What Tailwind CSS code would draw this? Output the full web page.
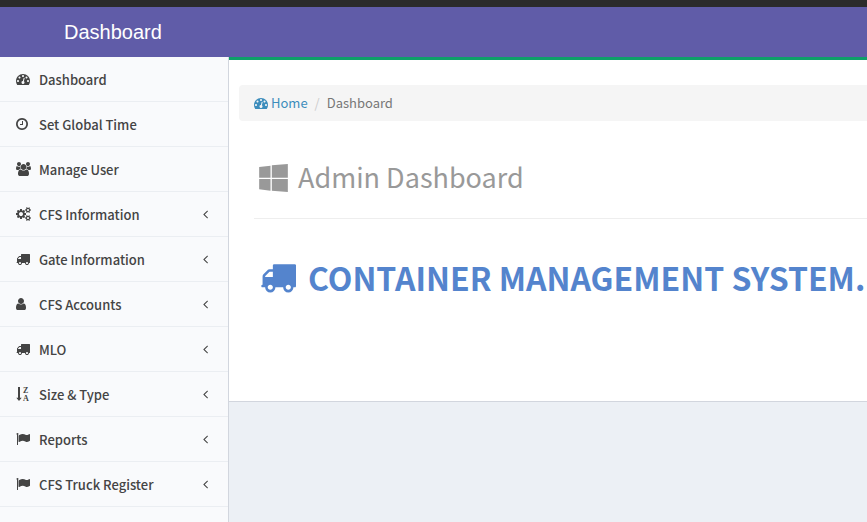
<!DOCTYPE html>
<html lang="en">
<head>
<meta charset="utf-8">
<meta name="viewport" content="width=device-width, initial-scale=1">
<title>Dashboard</title>
<script src="https://cdn.jsdelivr.net/npm/@tailwindcss/browser@4"></script>
</head>
<body class="h-screen overflow-hidden flex flex-col bg-[#ecf0f5] font-['Noto_Sans_CJK_SC','Noto_Sans',sans-serif] text-[13px] leading-5 text-[#333]">
<svg class="hidden" aria-hidden="true">
  <symbol id="tachometer" viewBox="0 0 1792 1792"><path d="M384 1152q0-53-37.500-90.500t-90.500-37.500-90.500 37.500-37.500 90.500 37.500 90.500 90.500 37.500 90.500-37.500 37.500-90.500zm192-448q0-53-37.500-90.500t-90.500-37.500-90.500 37.500-37.500 90.500 37.500 90.500 90.500 37.500 90.500-37.500 37.500-90.500zm428 481l101-382q6-26-7.500-48.500t-38.500-29.500-48 6.500-30 39.500l-101 382q-60 5-107 43.500t-63 98.500q-20 77 20 146t117 89 146-20 89-117q16-60-6-117t-72-91zm660-33q0-53-37.500-90.500t-90.500-37.500-90.500 37.500-37.500 90.500 37.500 90.500 90.500 37.500 90.500-37.500 37.500-90.500zm-640-640q0-53-37.500-90.500t-90.500-37.500-90.500 37.500-37.500 90.500 37.500 90.500 90.500 37.500 90.500-37.500 37.500-90.500zm448 192q0-53-37.500-90.500t-90.500-37.500-90.500 37.500-37.500 90.500 37.500 90.500 90.500 37.500 90.500-37.500 37.500-90.500zm320 448q0 261-141 483-19 29-54 29h-1402q-35 0-54-29-141-221-141-483 0-182 71-348t191-286 286-191 348-71 348 71 286 191 191 286 71 348z"/></symbol>
  <symbol id="clock" viewBox="128 0 1536 1792"><path d="M1024 544v448q0 14-9 23t-23 9h-320q-14 0-23-9t-9-23v-64q0-14 9-23t23-9h224v-352q0-14 9-23t23-9h64q14 0 23 9t9 23zm416 352q0-148-73-273t-198-198-273-73-273 73-198 198-73 273 73 273 198 198 273 73 273-73 198-198 73-273zm224 0q0 209-103 385.500t-279.500 279.500-385.500 103-385.500-103-279.500-279.500-103-385.500 103-385.500 279.500-279.500 385.500-103 385.500 103 279.500 279.500 103 385.500z"/></symbol>
  <symbol id="users" viewBox="0 0 1920 1792"><path d="M593 896q-162 5-265 128h-134q-82 0-138-40.500t-56-118.500q0-353 124-353 6 0 43.500 21t97.500 42.500 119 21.500q67 0 133-23-5 37-5 66 0 139 81 256zm1071 637q0 120-73 189.500t-194 69.500h-874q-121 0-194-69.500t-73-189.500q0-53 3.500-103.500t14-109 26.500-108.500 43-97.500 62-81 85.500-53.500 111.500-20q10 0 43 21.500t73 48 107 48 135 21.500 135-21.500 107-48 73-48 43-21.500q61 0 111.500 20t85.500 53.500 62 81 43 97.500 26.500 108.500 14 109 3.500 103.500zm-1024-1277q0 106-75 181t-181 75-181-75-75-181 75-181 181-75 181 75 75 181zm704 384q0 159-112.500 271.500t-271.500 112.500-271.500-112.500-112.500-271.500 112.500-271.500 271.500-112.500 271.500 112.500 112.500 271.500zm576 225q0 78-56 118.500t-138 40.500h-134q-103-123-265-128 81-117 81-256 0-29-5-66 66 23 133 23 59 0 119-21.500t97.500-42.500 43.500-21q124 0 124 353zm-128-609q0 106-75 181t-181 75-181-75-75-181 75-181 181-75 181 75 75 181z"/></symbol>
  <symbol id="cogs" viewBox="0 0 1920 1792"><path d="M896 896q0-106-75-181t-181-75-181 75-75 181 75 181 181 75 181-75 75-181zm768 512q0-52-38-90t-90-38-90 38-38 90q0 53 37.500 90.500t90.500 37.500 90.500-37.500 37.500-90.500zm0-1024q0-52-38-90t-90-38-90 38-38 90q0 53 37.500 90.500t90.500 37.500 90.500-37.500 37.500-90.500zm-384 421v185q0 10-7 19.500t-16 10.500l-155 24q-11 35-32 76 34 48 90 115 7 11 7 20 0 12-7 19-23 30-82.500 89.500t-78.500 59.500q-11 0-21-7l-115-90q-37 19-77 31-11 108-23 155-7 24-30 24h-186q-11 0-20-7.500t-10-17.500l-23-153q-34-10-75-31l-118 89q-7 7-20 7-11 0-21-8-144-133-144-160 0-9 7-19 10-14 41-53t47-61q-23-44-35-82l-152-24q-10-1-17-9.500t-7-19.500v-185q0-10 7-19.500t16-10.500l155-24q11-35 32-76-34-48-90-115-7-11-7-20 0-12 7-20 22-30 82-89t79-59q11 0 21 7l115 90q34-18 77-32 11-108 23-154 7-24 30-24h186q11 0 20 7.500t10 17.500l23 153q34 10 75 31l118-89q8-7 20-7 11 0 21 8 144 133 144 160 0 8-7 19-12 16-42 54t-45 60q23 48 34 82l152 23q10 2 17 10.500t7 19.500zm640 533v140q0 16-149 31-12 27-30 52 51 113 51 138 0 4-4 7-122 71-124 71-8 0-46-47t-52-68q-20 2-30 2t-30-2q-14 21-52 68t-46 47q-2 0-124-71-4-3-4-7 0-25 51-138-18-25-30-52-149-15-149-31v-140q0-16 149-31 13-29 30-52-51-113-51-138 0-4 4-7 4-2 35-20t59-34 30-16q8 0 46 46.500t52 67.500q20-2 30-2t30 2q51-71 92-112l6-2q4 0 124 70 4 3 4 7 0 25-51 138 17 23 30 52 149 15 149 31zm0-1024v140q0 16-149 31-12 27-30 52 51 113 51 138 0 4-4 7-122 71-124 71-8 0-46-47t-52-68q-20 2-30 2t-30-2q-14 21-52 68t-46 47q-2 0-124-71-4-3-4-7 0-25 51-138-18-25-30-52-149-15-149-31v-140q0-16 149-31 13-29 30-52-51-113-51-138 0-4 4-7 4-2 35-20t59-34 30-16q8 0 46 46.500t52 67.500q20-2 30-2t30 2q51-71 92-112l6-2q4 0 124 70 4 3 4 7 0 25-51 138 17 23 30 52 149 15 149 31z"/></symbol>
  <symbol id="truck" viewBox="0 0 1792 1792"><path d="M640 1408q0-52-38-90t-90-38-90 38-38 90 38 90 90 38 90-38 38-90zm-384-512h384v-256h-158q-13 0-22 9l-195 195q-9 9-9 22v30zm1280 512q0-52-38-90t-90-38-90 38-38 90 38 90 90 38 90-38 38-90zm256-1088v1024q0 15-4 26.500t-13.500 18.500-16.500 11.500-23.500 6-22.500 2-25.500 0-22.500-.5q0 106-75 181t-181 75-181-75-75-181h-384q0 106-75 181t-181 75-181-75-75-181h-64q-3 0-22.500.5t-25.500 0-22.500-2-23.500-6-16.500-11.500-13.500-18.500-4-26.500q0-26 19-45t45-19v-320q0-8-.5-35t0-38 2.500-34.500 6.500-37 14-30.500 22.500-30l198-198q19-19 50.500-32t58.500-13h160v-192q0-26 19-45t45-19h1024q26 0 45 19t19 45z"/></symbol>
  <symbol id="user" viewBox="256 0 1280 1792"><path d="M1536 1399q0 109-62.500 187t-150.500 78h-854q-88 0-150.500-78t-62.500-187q0-85 8.500-160.500t31.500-152 58.500-131 94-89 134.500-34.500q131 128 313 128t313-128q76 0 134.500 34.500t94 89 58.500 131 31.500 152 8.500 160.500zm-256-887q0 159-112.500 271.500t-271.500 112.500-271.500-112.500-112.500-271.500 112.500-271.500 271.500-112.500 271.500 112.500 112.500 271.500z"/></symbol>
  <symbol id="sort" viewBox="0 0 14 14"><path d="M2 0h2v10.800h1.700L3 14 .3 10.800h1.700z"/><text x="7" y="6" font-family="Liberation Serif" font-weight="700" font-size="8">Z</text><text x="7" y="14" font-family="Liberation Serif" font-weight="700" font-size="8">A</text></symbol>
  <symbol id="flag" viewBox="0 0 1792 1792"><path d="M320 256q0 72-64 110v1266q0 13-9.500 22.500t-22.500 9.500h-64q-13 0-22.500-9.500t-9.500-22.500v-1266q-64-38-64-110 0-53 37.500-90.500t90.500-37.500 90.500 37.500 37.500 90.500zm1472 64v763q0 25-12.500 38.500t-39.500 27.500q-215 116-369 116-61 0-123.500-22t-108.500-48-115.500-48-142.500-22q-192 0-464 146-17 9-33 9-26 0-45-19t-19-45v-742q0-32 31-55 21-14 79-43 236-120 421-120 107 0 200 29t219 88q38 19 88 19 54 0 117.500-21t110-47 88-47 54.500-21q26 0 45 19t19 45z"/></symbol>
  <symbol id="angle" viewBox="576 0 640 1792"><path d="M1203 544q0 13-10 23l-393 393 393 393q10 10 10 23t-10 23l-50 50q-10 10-23 10t-23-10l-466-466q-10-10-10-23t10-23l466-466q10-10 23-10t23 10l50 50q10 10 10 23z"/></symbol>
  <symbol id="windows" viewBox="0 0 86 84"><path d="M0 9l34-4v36H0zM38 4l48-4v41H38zM0 45h34v35L0 76zM38 45h48v39l-48-4z"/></symbol>
</svg>
<div class="h-[7px] shrink-0 bg-[#2b2b2b]"></div>
<header class="h-[50px] shrink-0 bg-[#605ca8] px-16 flex items-center">
  <a href="#" class="font-['Liberation_Sans',Arial,sans-serif] text-[20px] text-white">Dashboard</a>
</header>
<div class="flex flex-1 min-h-0">
  <nav class="w-[229px] shrink-0 bg-[#f9fafc] border-r border-[#d2d6de] font-medium text-[#444]">
    <ul class="[&>li]:border-b [&>li]:border-[#ebeef2] [&_a]:flex [&_a]:h-11 [&_a]:items-center [&_a]:pl-4 [&_a]:pr-5 [&_svg]:h-[14px] [&_svg]:fill-current [&_i]:w-[23px] [&_i]:not-italic [&_span]:flex-1 [&_span]:pt-px">
      <li><a href="#"><i><svg class="w-[14px]"><use href="#tachometer"/></svg></i><span>Dashboard</span></a></li>
      <li><a href="#"><i><svg class="w-[12px]"><use href="#clock"/></svg></i><span>Set Global Time</span></a></li>
      <li><a href="#"><i><svg class="w-[15px]"><use href="#users"/></svg></i><span>Manage User</span></a></li>
      <li><a href="#"><i><svg class="w-[15px]"><use href="#cogs"/></svg></i><span>CFS Information</span><svg class="w-[5px]"><use href="#angle"/></svg></a></li>
      <li><a href="#"><i><svg class="w-[14px]"><use href="#truck"/></svg></i><span>Gate Information</span><svg class="w-[5px]"><use href="#angle"/></svg></a></li>
      <li><a href="#"><i><svg class="w-[10px]"><use href="#user"/></svg></i><span>CFS Accounts</span><svg class="w-[5px]"><use href="#angle"/></svg></a></li>
      <li><a href="#"><i><svg class="w-[14px]"><use href="#truck"/></svg></i><span>MLO</span><svg class="w-[5px]"><use href="#angle"/></svg></a></li>
      <li><a href="#"><i><svg class="w-[14px]"><use href="#sort"/></svg></i><span>Size &amp; Type</span><svg class="w-[5px]"><use href="#angle"/></svg></a></li>
      <li><a href="#"><i><svg class="w-[14px]"><use href="#flag"/></svg></i><span>Reports</span><svg class="w-[5px]"><use href="#angle"/></svg></a></li>
      <li><a href="#"><i><svg class="w-[14px]"><use href="#flag"/></svg></i><span>CFS Truck Register</span><svg class="w-[5px]"><use href="#angle"/></svg></a></li>
    </ul>
  </nav>
  <div class="flex-1 min-w-0">
    <main class="bg-white border-t-[3px] border-t-[#0ea069] border-b border-b-[#d2d6de] pt-[25px] pb-[104px] pl-[10px]">
      <nav aria-label="Breadcrumb" class="bg-[#f5f5f5] rounded-l h-9 px-[15px] flex items-center text-[#777]">
        <a href="#" class="flex items-center gap-[3px] text-[#3c8dbc]"><svg class="size-[14px] fill-current"><use href="#tachometer"/></svg>Home</a>
        <span class="px-[7px] text-[#ccc]">/</span>
        <span>Dashboard</span>
      </nav>
      <div class="ml-[15px]">
        <h1 class="h-[98px] pt-4 pl-[5px] flex items-center gap-[10px] border-b border-[#eee] text-[27px] text-[#999]"><svg class="w-[29px] h-7 fill-current"><use href="#windows"/></svg><span class="pb-0.5">Admin Dashboard</span></h1>
        <h2 class="pt-[38px] pl-[6px] flex items-center gap-3 leading-10 text-[32px] font-bold whitespace-nowrap text-[#5484cd]"><svg class="size-9 shrink-0 fill-current"><use href="#truck"/></svg>CONTAINER MANAGEMENT SYSTEM.</h2>
      </div>
    </main>
  </div>
</div>
</body>
</html>
